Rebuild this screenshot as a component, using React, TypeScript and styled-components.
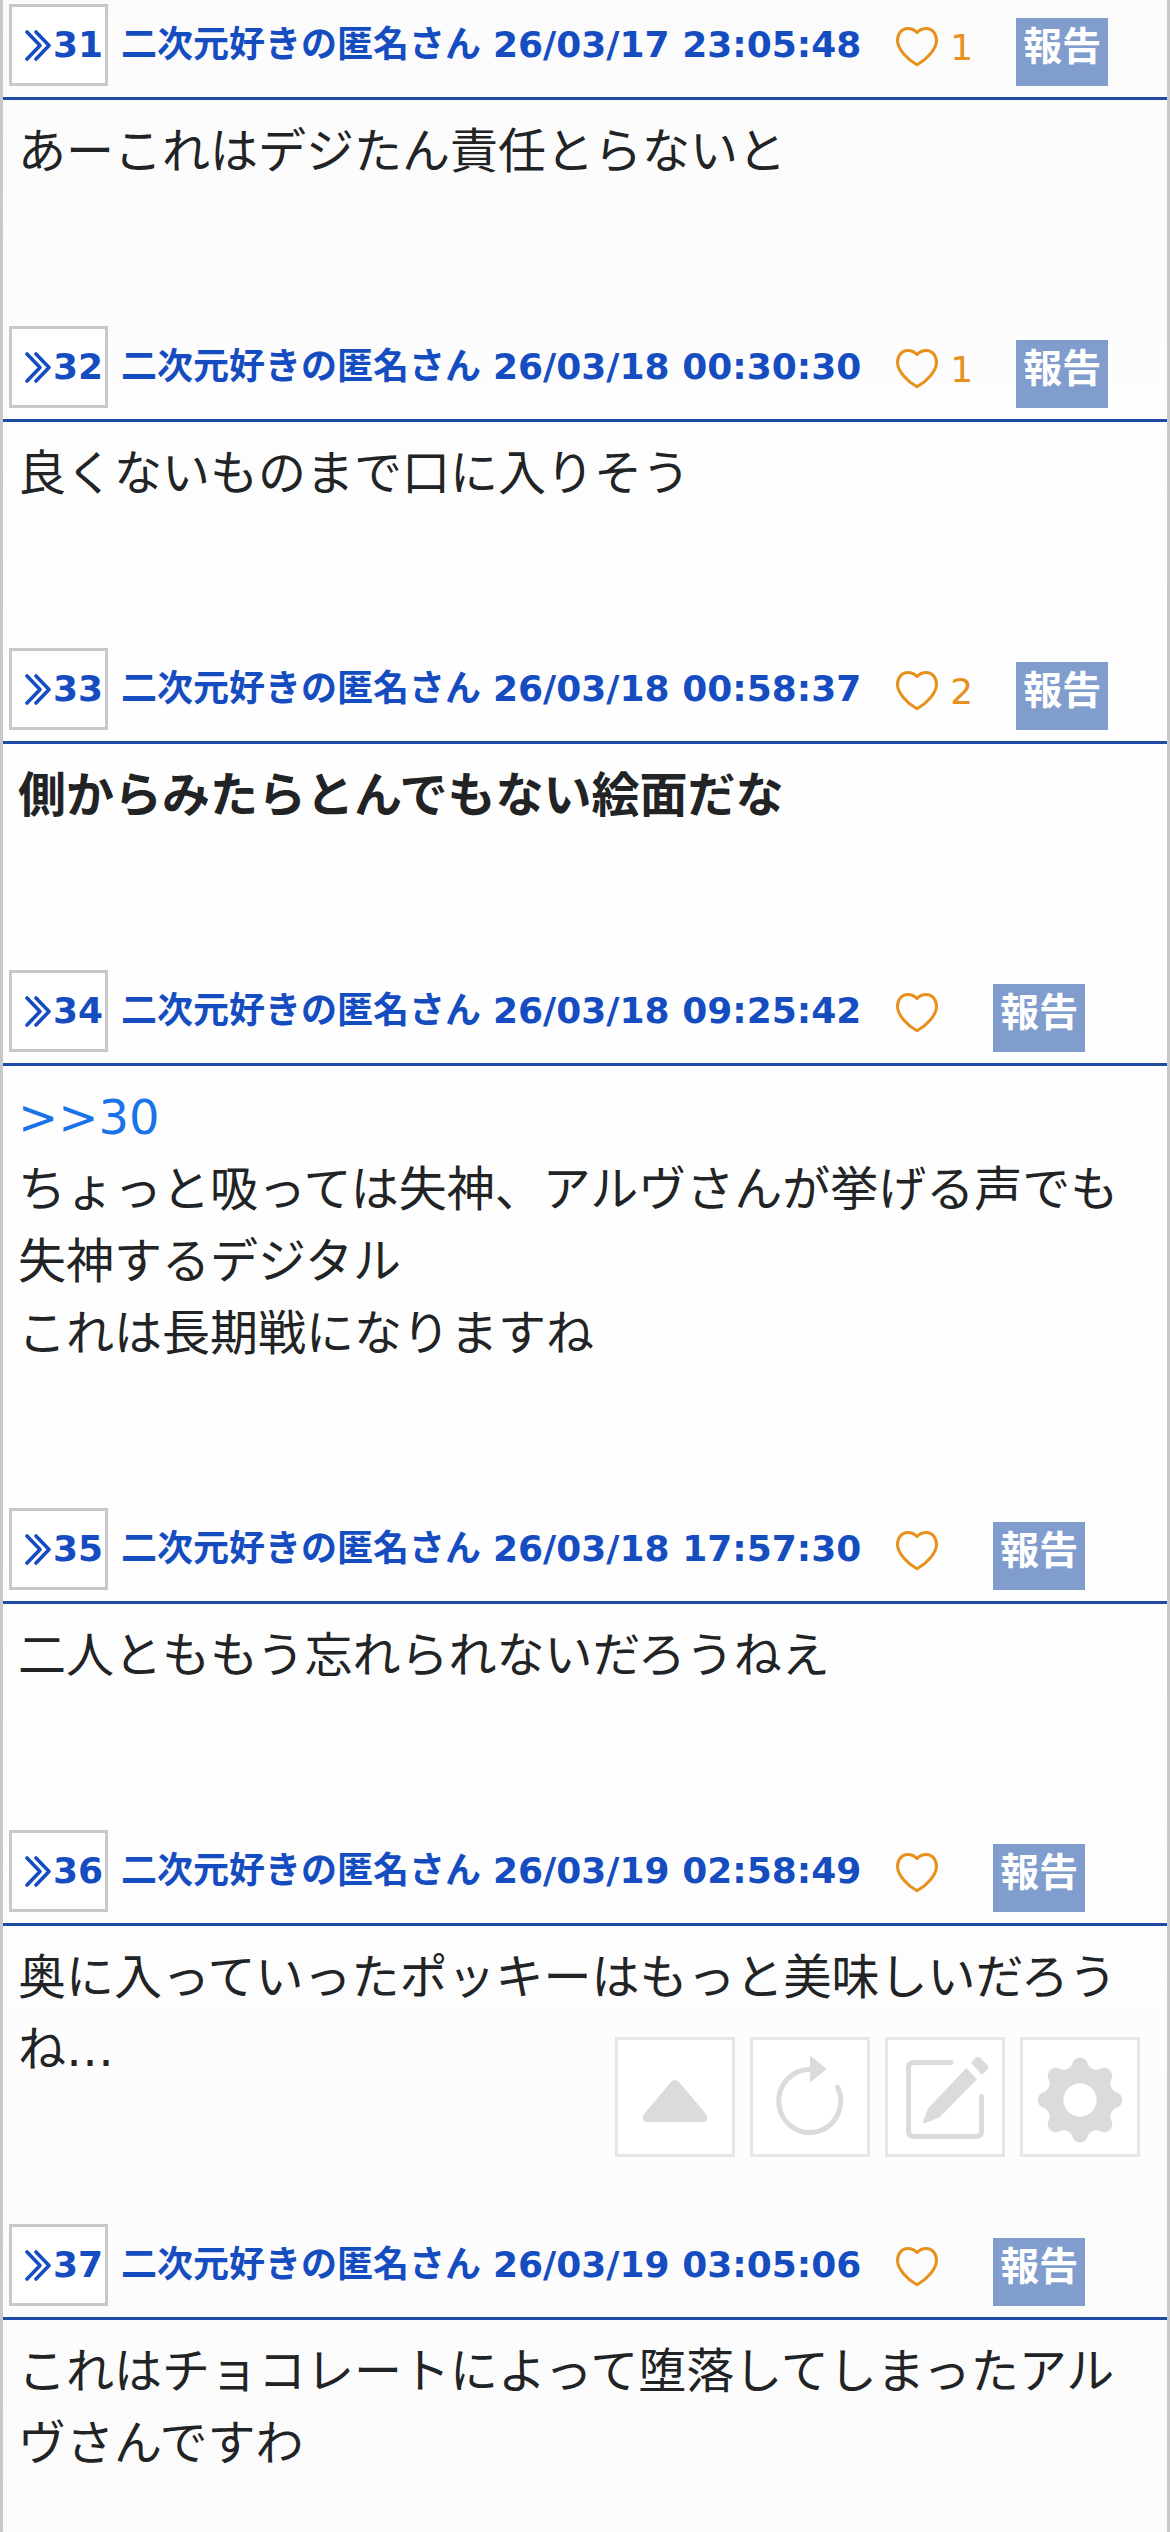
import React from "react";
import styled, { createGlobalStyle } from "styled-components";

const GlobalStyle = createGlobalStyle`
  *, *::before, *::after { box-sizing: border-box; }
  body {
    margin: 0;
    background: #fdfdfd;
    color: #212325;
    font-family: "DejaVu Sans", "Noto Sans CJK JP", sans-serif;
  }
`;

const Thread = styled.main`
  min-height: 100vh;
  overflow: hidden;
  border: solid #c8c8c8;
  border-width: 0 3px;
  background: linear-gradient(#fbfbfb, #fefefe 700px, #fefefe 1500px, #fbfbfb);
`;

const Post = styled.article`
  display: flex;
  flex-direction: column;
`;

const Header = styled.header`
  display: flex;
  align-items: flex-start;
  padding: 4px 6px 11px;
  border-bottom: 3px solid #1d4ba5;
`;

const ReplyButton = styled.button`
  display: flex;
  align-items: center;
  justify-content: flex-end;
  gap: 2px;
  width: 99px;
  height: 82px;
  padding: 0 2px 0 0;
  border: 3px solid #c8c8c8;
  background: #fff;
  color: #154dc1;
  font: inherit;
  font-size: 36px;
  font-weight: 700;
  line-height: 42px;
`;

const Meta = styled.div`
  display: flex;
  gap: 12px;
  margin-left: 13px;
  padding-top: 14px;
  color: #154dc1;
  font-size: 36px;
  font-weight: 700;
  line-height: 54px;
  white-space: nowrap;
`;

const LikeButton = styled.button`
  display: flex;
  align-items: center;
  gap: 11px;
  height: 54px;
  margin: 17px 0 0 34px;
  padding: 0;
  border: 0;
  background: none;
  color: #e8901c;
  font: inherit;
  font-size: 36px;
  line-height: 54px;
`;

const ReportButton = styled.button`
  height: 68px;
  margin: 14px 0 0 43px;
  padding: 0 7px 11px;
  border: 0;
  background: #809dcd;
  color: #fff;
  font: inherit;
  font-size: 39px;
  font-weight: 700;
  line-height: 57px;
`;

const Body = styled.div<{ $strong?: boolean }>`
  padding: 15px 15px 135px;
  font-size: 48px;
  font-weight: ${(p) => (p.$strong ? 700 : 400)};
  line-height: 72px;
`;

const Paragraph = styled.p`
  margin: 0;
`;

const QuoteLink = styled.a`
  color: #1a73e8;
  text-decoration: none;
`;

const Tools = styled.nav`
  position: fixed;
  right: 30px;
  bottom: 375px;
  display: flex;
  gap: 15px;
`;

const ToolButton = styled.button`
  width: 120px;
  height: 120px;
  padding: 0;
  border: 3px solid #e6e6e6;
  background: #fff;
  color: #dbdbdb;

  svg {
    display: block;
    margin: -3px;
  }
`;

const Chevrons = () => (
  <svg width="26" height="31" viewBox="0 0 26 31" fill="none" stroke="currentColor" strokeWidth="3.6" strokeLinecap="round" strokeLinejoin="round" aria-hidden="true">
    <path d="M2 2L15 15.5L2 29M11 2L24 15.5L11 29" />
  </svg>
);

const Heart = () => (
  <svg width="44" height="42" viewBox="0 0 44 42" fill="none" stroke="currentColor" strokeWidth="3" strokeLinejoin="round" aria-hidden="true">
    <path d="M22 5.5C18.5 2 15.5 1.5 13 1.5C6.500 1.5 2.5 7 2.5 13.5C2.5 22 12 32 22 37.8C32 32 41.5 22 41.5 13.5C41.5 7 37.5 1.5 31 1.5C28.500 1.5 25.500 2 22 5.500Z" />
  </svg>
);

const gearPath = (() => {
  const at = (tooth: number, side: number) => {
    const a = (tooth * Math.PI) / 4;
    const r = 35.6;
    const t = 7.9 * side;
    const x = 60 + r * Math.sin(a) + t * Math.cos(a);
    const y = 63 - r * Math.cos(a) + t * Math.sin(a);
    return `${x.toFixed(2)} ${y.toFixed(2)}`;
  };
  let d = `M${at(0, -1)}`;
  for (let i = 0; i < 8; i++) {
    d += `A8 8 0 0 1 ${at(i, 1)}A10 10 0 0 0 ${at(i + 1, -1)}`;
  }
  return `${d}ZM60 46.4a16.6 16.6 0 1 0 0 33.2a16.6 16.6 0 1 0 0-33.2Z`;
})();

const ToolIcon = ({ children }: { children: React.ReactNode }) => (
  <svg width="120" height="120" viewBox="0 0 120 120" fill="currentColor" aria-hidden="true">
    {children}
  </svg>
);

type PostData = {
  id: number;
  date: string;
  likes?: number;
  strong?: boolean;
  quote?: number;
  lines: string[];
};

const posts: PostData[] = [
  { id: 31, date: "26/03/17 23:05:48", likes: 1, lines: ["あーこれはデジたん責任とらないと"] },
  { id: 32, date: "26/03/18 00:30:30", likes: 1, lines: ["良くないものまで口に入りそう"] },
  { id: 33, date: "26/03/18 00:58:37", likes: 2, strong: true, lines: ["側からみたらとんでもない絵面だな"] },
  {
    id: 34,
    date: "26/03/18 09:25:42",
    quote: 30,
    lines: ["ちょっと吸っては失神、アルヴさんが挙げる声でも失神するデジタル", "これは長期戦になりますね"],
  },
  { id: 35, date: "26/03/18 17:57:30", lines: ["二人とももう忘れられないだろうねえ"] },
  { id: 36, date: "26/03/19 02:58:49", lines: ["奥に入っていったポッキーはもっと美味しいだろうね…"] },
  { id: 37, date: "26/03/19 03:05:06", lines: ["これはチョコレートによって堕落してしまったアルヴさんですわ"] },
];

export default function App() {
  return (
    <>
      <GlobalStyle />
      <Thread lang="ja">
        {posts.map((post) => (
          <Post key={post.id} id={`res${post.id}`}>
            <Header>
              <ReplyButton type="button">
                <Chevrons />
                {post.id}
              </ReplyButton>
              <Meta>
                <span>二次元好きの匿名さん</span>
                <time>{post.date}</time>
              </Meta>
              <LikeButton type="button" aria-label="いいね">
                <Heart />
                <span>{post.likes}</span>
              </LikeButton>
              <ReportButton type="button">報告</ReportButton>
            </Header>
            <Body $strong={post.strong}>
              {post.quote && (
                <Paragraph>
                  <QuoteLink href={`#res${post.quote}`}>&gt;&gt;{post.quote}</QuoteLink>
                </Paragraph>
              )}
              {post.lines.map((line) => (
                <Paragraph key={line}>{line}</Paragraph>
              ))}
            </Body>
          </Post>
        ))}
      </Thread>
      <Tools>
        <ToolButton type="button" aria-label="上へ">
          <ToolIcon>
            <path d="M56 45Q60 41 64 45L91 77Q95 85 87 85H33Q25 85 29 77Z" />
          </ToolIcon>
        </ToolButton>
        <ToolButton type="button" aria-label="更新">
          <ToolIcon>
            <path d="M60.5 32.5A31 31.5 0 1 0 87.5 50" fill="none" stroke="currentColor" strokeWidth="5" strokeLinecap="round" />
            <path d="M60 20.5Q60 18 62 20L75.5 31Q76.5 32 75.5 33L62 44Q60 46 60 43.5Z" />
          </ToolIcon>
        </ToolButton>
        <ToolButton type="button" aria-label="書き込む">
          <ToolIcon>
            <path d="M66 25.5H29Q23.5 25.5 23.5 31V94Q23.5 99.5 29 99.5H91Q96.5 99.5 96.5 94V59.5" fill="none" stroke="currentColor" strokeWidth="5" strokeLinecap="round" />
            <path d="M81.2 31L92 42.3L54 80.7L39.5 86.3Q37.5 86.5 38 84.5L43 71.5Z" />
            <path d="M86 25.7L90.5 21Q93 18.8 95.5 21L102.3 28Q104.3 30.7 102.3 33L96.8 37.7Z" />
          </ToolIcon>
        </ToolButton>
        <ToolButton type="button" aria-label="設定">
          <ToolIcon>
            <path fillRule="evenodd" d={gearPath} />
          </ToolIcon>
        </ToolButton>
      </Tools>
    </>
  );
}
